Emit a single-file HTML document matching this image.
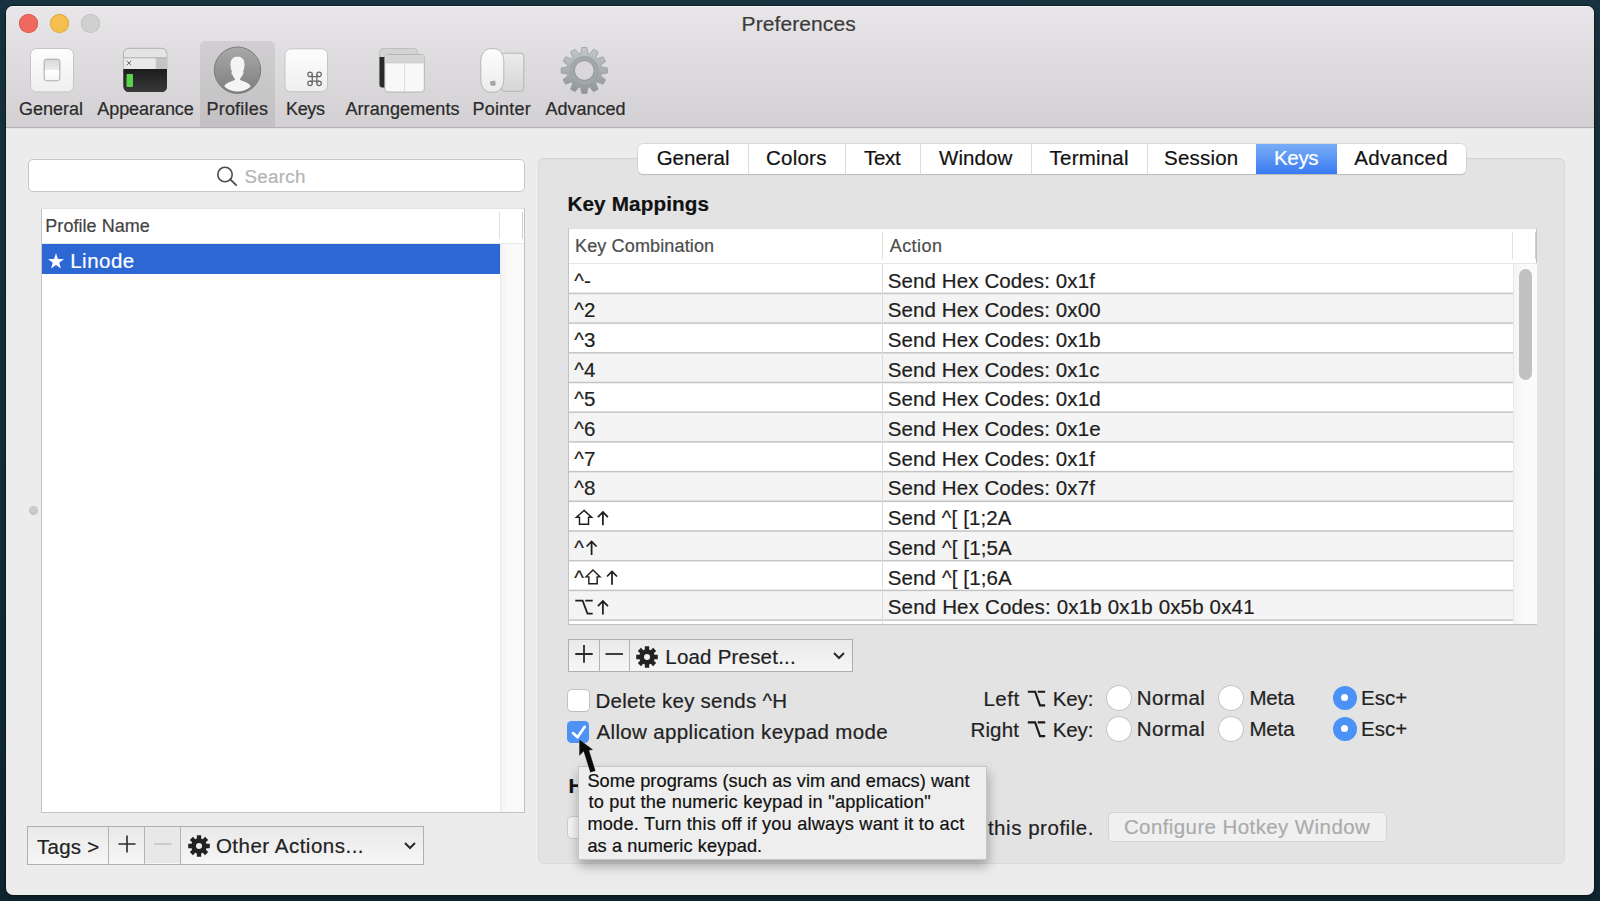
<!DOCTYPE html>
<html><head><meta charset="utf-8"><title>Preferences</title>
<style>
html,body{margin:0;padding:0;}
body{width:1600px;height:901px;overflow:hidden;position:relative;background:linear-gradient(180deg,#17333f 0%,#132d38 55%,#0f2530 100%);font-family:"Liberation Sans", sans-serif;}
body>div{position:absolute;}
.t{white-space:nowrap;-webkit-text-stroke:0.2px currentColor;}
</style></head><body>
<div style="left:6px;top:6px;width:1588px;height:889px;background:#ececec;border-radius:7px;box-shadow:0 0 0 1px rgba(0,0,0,0.3),0 2px 5px rgba(0,0,0,0.3);"></div>
<div style="left:6px;top:6px;width:1588px;height:121px;background:linear-gradient(#e8e6e8,#d2d0d2);border-radius:7px 7px 0 0;"></div>
<div style="left:6px;top:127px;width:1588px;height:1px;background:#b3b1b3;"></div>
<div style="left:6px;top:128px;width:1588px;height:1px;background:rgba(0,0,0,0.04);"></div>
<div style="left:13px;top:6px;width:1574px;height:1px;background:#f6f5f6;"></div>
<div style="left:18.9px;top:14.0px;width:19px;height:19px;background:#ee6a5e;border-radius:50%;box-shadow:inset 0 0 0 0.8px #d7594d;"></div>
<div style="left:50.0px;top:14.0px;width:19px;height:19px;background:#f5bf4f;border-radius:50%;box-shadow:inset 0 0 0 0.8px #dba53b;"></div>
<div style="left:81.0px;top:14.0px;width:19px;height:19px;background:#d1d0d1;border-radius:50%;box-shadow:inset 0 0 0 0.8px #bfbebf;"></div>
<div class="t" style="left:741.60px;top:12.92px;font-size:21px;line-height:21px;color:#3b3b3b;font-weight:normal;letter-spacing:0.090px;">Preferences</div>
<div style="left:200px;top:41px;width:75px;height:86px;background:rgba(0,0,0,0.075);border-radius:5px 5px 0 0;"></div>
<div class="t" style="left:19.00px;top:100.46px;font-size:18px;line-height:18px;color:#2a2a2a;font-weight:normal;letter-spacing:0.000px;">General</div>
<div class="t" style="left:97.25px;top:100.46px;font-size:18px;line-height:18px;color:#2a2a2a;font-weight:normal;letter-spacing:-0.056px;">Appearance</div>
<div class="t" style="left:206.50px;top:100.46px;font-size:18px;line-height:18px;color:#2a2a2a;font-weight:normal;letter-spacing:0.200px;">Profiles</div>
<div class="t" style="left:286.00px;top:100.46px;font-size:18px;line-height:18px;color:#2a2a2a;font-weight:normal;letter-spacing:-0.333px;">Keys</div>
<div class="t" style="left:345.40px;top:100.46px;font-size:18px;line-height:18px;color:#2a2a2a;font-weight:normal;letter-spacing:0.100px;">Arrangements</div>
<div class="t" style="left:472.50px;top:100.46px;font-size:18px;line-height:18px;color:#2a2a2a;font-weight:normal;letter-spacing:0.183px;">Pointer</div>
<div class="t" style="left:545.50px;top:100.46px;font-size:18px;line-height:18px;color:#2a2a2a;font-weight:normal;letter-spacing:0.000px;">Advanced</div>

<svg style="position:absolute;left:0;top:0" width="700" height="130" viewBox="0 0 700 130">
<defs>
<linearGradient id="gW" x1="0" y1="0" x2="0" y2="1"><stop offset="0" stop-color="#fdfdfd"/><stop offset="1" stop-color="#efeff0"/></linearGradient>
<linearGradient id="gSw" x1="0" y1="0" x2="0" y2="1"><stop offset="0" stop-color="#d8d8da"/><stop offset="0.5" stop-color="#ececee"/><stop offset="0.52" stop-color="#ffffff"/><stop offset="1" stop-color="#f4f4f4"/></linearGradient>
<linearGradient id="gTerm" x1="0" y1="0" x2="0" y2="1"><stop offset="0" stop-color="#1c1c1c"/><stop offset="1" stop-color="#3a3a3a"/></linearGradient>
<linearGradient id="gProf" x1="0" y1="0" x2="0" y2="1"><stop offset="0" stop-color="#a9a9a9"/><stop offset="1" stop-color="#7e7e7e"/></linearGradient>
<linearGradient id="gGear" x1="0" y1="0" x2="0" y2="1"><stop offset="0" stop-color="#c3c8ca"/><stop offset="1" stop-color="#8f9496"/></linearGradient>
<linearGradient id="gPad" x1="0" y1="0" x2="0" y2="1"><stop offset="0" stop-color="#ececec"/><stop offset="1" stop-color="#d6d6d6"/></linearGradient>
</defs>
<!-- General -->
<rect x="30.5" y="48.5" width="43" height="43.5" rx="6" fill="url(#gW)" stroke="#c4c4c6" stroke-width="1"/>
<rect x="44.2" y="59.2" width="15.6" height="21.6" rx="2.5" fill="url(#gSw)" stroke="#a9a9ab" stroke-width="1"/>
<!-- Appearance -->
<rect x="123.5" y="48.2" width="43.5" height="43.8" rx="5.5" fill="#2e2e2e"/>
<path d="M123.5 69 V53.7 a5.5 5.5 0 0 1 5.5 -5.5 H161.5 a5.5 5.5 0 0 1 5.5 5.5 V69 Z" fill="#e4e4e4" stroke="#b5b5b5" stroke-width="0.8"/>
<rect x="123.8" y="58" width="32" height="11" fill="#e9e9e9"/>
<rect x="155.8" y="58" width="11" height="11" fill="#c4c4c4"/>
<line x1="123.8" y1="57.8" x2="166.8" y2="57.8" stroke="#9f9f9f" stroke-width="0.8"/>
<path d="M126.8 60.8 L131.2 65.2 M131.2 60.8 L126.8 65.2" stroke="#555" stroke-width="0.8"/>
<path d="M123.5 69 H167 V86.5 a5.5 5.5 0 0 1 -5.5 5.5 H129 a5.5 5.5 0 0 1 -5.5 -5.5 Z" fill="url(#gTerm)"/>
<rect x="126.5" y="74" width="6.5" height="13" rx="1" fill="#5ad24a"/>
<!-- Profiles -->
<circle cx="237.5" cy="70.2" r="23.2" fill="url(#gProf)" stroke="#6f6f6f" stroke-width="0.8"/>
<path d="M237.5 56.5 c-5 0 -7.2 3.8 -7 8.5 c0.1 2.5 0.6 5 1.5 6.8 c-0.8 1 -0.6 2.4 0.5 3 c0.5 1.5 1.4 3 2.4 3.9 v1.4 c-3 1.3 -9.5 2.8 -10.6 6.4 c3.8 3.4 8.3 5.1 13.2 5.1 s9.4 -1.7 13.2 -5.1 c-1.1 -3.6 -7.6 -5.1 -10.6 -6.4 v-1.4 c1 -0.9 1.9 -2.4 2.4 -3.9 c1.1 -0.6 1.3 -2 0.5 -3 c0.9 -1.8 1.4 -4.3 1.5 -6.8 c0.2 -4.7 -2 -8.5 -7 -8.5 z" fill="#f4f4f4"/>
<!-- Keys -->
<rect x="285" y="48.8" width="42.5" height="43" rx="6" fill="url(#gW)" stroke="#c4c4c6" stroke-width="1"/>
<path d="M312.30 74.25 V83.25 M316.80 74.25 V83.25 M310.05 76.50 H319.05 M310.05 81.00 H319.05" fill="none" stroke="#6b6b6b" stroke-width="1.25"/><circle cx="310.05" cy="74.25" r="2.25" fill="none" stroke="#6b6b6b" stroke-width="1.25"/><circle cx="319.05" cy="74.25" r="2.25" fill="none" stroke="#6b6b6b" stroke-width="1.25"/><circle cx="310.05" cy="83.25" r="2.25" fill="none" stroke="#6b6b6b" stroke-width="1.25"/><circle cx="319.05" cy="83.25" r="2.25" fill="none" stroke="#6b6b6b" stroke-width="1.25"/>
<!-- Arrangements -->
<path d="M379.5 87 V52 a3.5 3.5 0 0 1 3.5 -3.5 H414 a3.5 3.5 0 0 1 3.5 3.5 V88 H383 a3.5 3.5 0 0 1 -3.5 -3.5 z" fill="#d3d3d3" stroke="#b9b9b9" stroke-width="0.8"/>
<path d="M379.5 57 H385.5 V87.5 H383 a3.5 3.5 0 0 1 -3.5 -3.5 Z" fill="#2a2a2a"/>
<rect x="384.8" y="54.5" width="39.5" height="37.5" rx="3" fill="#f8f8f9" stroke="#b0b0b0" stroke-width="0.9"/>
<path d="M385.2 63 V57.9 a3 3 0 0 1 3 -3 H420.9 a3 3 0 0 1 3 3 V63 Z" fill="#d5d5d5"/>
<line x1="385.2" y1="63" x2="423.9" y2="63" stroke="#c4c4c4" stroke-width="0.6"/>
<line x1="404.5" y1="63" x2="404.5" y2="91.5" stroke="#d6d6d6" stroke-width="0.8"/>
<!-- Pointer -->
<linearGradient id="gMouse" x1="0" y1="0" x2="0" y2="1"><stop offset="0" stop-color="#fdfdfd"/><stop offset="1" stop-color="#ececee"/></linearGradient>
<rect x="501.5" y="53.3" width="22.3" height="38" rx="2.8" fill="url(#gPad)" stroke="#a9a9a9" stroke-width="0.8"/>
<rect x="480.8" y="48.6" width="23" height="43.6" rx="9.5" ry="12" fill="url(#gMouse)" stroke="#a9a9a9" stroke-width="0.8"/>
<path d="M493 81.2 c-0.6 -0.3 -1.3 -0.4 -1.9 -0.1 c-1.2 0.5 -1.4 2.2 -0.7 3.5 c0.4 0.7 0.9 1.4 1.5 1.3 c0.4 0 0.6 -0.3 1.1 -0.3 s0.7 0.3 1.1 0.3 c0.6 0 1.1 -0.7 1.5 -1.3 c0.2 -0.3 0.3 -0.6 0.4 -0.9 c-0.9 -0.4 -1.1 -1.7 -0.3 -2.3 c-0.4 -0.5 -1 -0.7 -1.5 -0.6 c-0.5 0 -0.8 0.3 -1.2 0.4 z M493.1 80.9 c0.1 -0.6 0.5 -1.1 1 -1.3 c0.1 0.6 -0.3 1.2 -1 1.3 z" fill="#a4a4a6"/>
<!-- Advanced gear -->
<g transform="translate(584.3,70.5)">
<path id="gearp" fill="url(#gGear)" stroke="#8a8f91" stroke-width="0.6" d="M-3.61 -16.92 L-2.60 -23.05 L2.60 -23.05 L3.61 -16.92 L5.34 -16.46 L9.27 -21.27 L13.78 -18.66 L11.58 -12.85 L12.85 -11.58 L18.66 -13.78 L21.27 -9.27 L16.46 -5.34 L16.92 -3.61 L23.05 -2.60 L23.05 2.60 L16.92 3.61 L16.46 5.34 L21.27 9.27 L18.66 13.78 L12.85 11.58 L11.58 12.85 L13.78 18.66 L9.27 21.27 L5.34 16.46 L3.61 16.92 L2.60 23.05 L-2.60 23.05 L-3.61 16.92 L-5.34 16.46 L-9.27 21.27 L-13.78 18.66 L-11.58 12.85 L-12.85 11.58 L-18.66 13.78 L-21.27 9.27 L-16.46 5.34 L-16.92 3.61 L-23.05 2.60 L-23.05 -2.60 L-16.92 -3.61 L-16.46 -5.34 L-21.27 -9.27 L-18.66 -13.78 L-12.85 -11.58 L-11.58 -12.85 L-13.78 -18.66 L-9.27 -21.27 L-5.34 -16.46 Z"/>
<circle r="12.3" fill="none" stroke="#a2a7a9" stroke-width="3.6"/>
<circle r="14.2" fill="none" stroke="#9aa0a2" stroke-width="0.7"/>
<circle r="9.9" fill="#d9d7d9" stroke="#858a8c" stroke-width="0.9"/>
</g>
</svg>

<div style="left:27.5px;top:159px;width:497px;height:32.6px;background:#fff;border:1px solid #c7c7c7;border-radius:5px;box-sizing:border-box;"></div>
<svg style="position:absolute;left:214px;top:164px" width="26" height="26" viewBox="0 0 26 26"><circle cx="11" cy="10.5" r="7.2" fill="none" stroke="#4d4d4d" stroke-width="1.6"/><line x1="16.2" y1="15.4" x2="22.2" y2="21.2" stroke="#4d4d4d" stroke-width="1.8" stroke-linecap="round"/></svg>
<div class="t" style="left:244.40px;top:168.18px;font-size:18.8px;line-height:18.8px;color:#b4b4b4;font-weight:normal;letter-spacing:0.320px;">Search</div>
<div style="left:41px;top:207.8px;width:484px;height:605.2px;background:#fff;border:1px solid #c4c4c4;border-top-color:#e2e2e2;box-sizing:border-box;"></div>
<div style="left:42px;top:243px;width:482px;height:1px;background:#e8e8e8;"></div>
<div style="left:499px;top:212px;width:1px;height:27px;background:#e0e0e0;"></div>
<div style="left:522.3px;top:212px;width:1.2px;height:27px;background:#cfcfcf;"></div>
<div style="left:500px;top:244px;width:24px;height:568px;background:linear-gradient(90deg,#f3f3f3,#fafafa 30%,#f9f9f9);border-left:1px solid #ececec;box-sizing:border-box;"></div>
<div class="t" style="left:45.30px;top:217.16px;font-size:18px;line-height:18px;color:#444;font-weight:normal;letter-spacing:0.045px;">Profile Name</div>
<div style="left:42px;top:244px;width:458px;height:29.5px;background:#2c67d3;"></div>
<svg style="position:absolute;left:0;top:0" width="200" height="300"><polygon points="56.00,253.20 57.97,258.88 63.99,259.00 59.20,262.64 60.94,268.40 56.00,264.96 51.06,268.40 52.80,262.64 48.01,259.00 54.03,258.88" fill="#fff"/></svg>
<div class="t" style="left:70.20px;top:251.04px;font-size:20.5px;line-height:20.5px;color:#fff;font-weight:normal;letter-spacing:0.500px;">Linode</div>
<div style="left:29.2px;top:506.2px;width:9px;height:9px;background:radial-gradient(circle at 50% 40%,#d0d0d0,#bdbdbd);border-radius:50%;"></div>
<div style="left:27.3px;top:826.4px;width:397.2px;height:38.4px;background:linear-gradient(#e9e9e9,#f6f6f6);border:1px solid #afafaf;box-sizing:border-box;"></div>
<div style="left:144.6px;top:827.4px;width:35.7px;height:36px;background:#e8e8e8;"></div>
<div style="left:108.1px;top:827px;width:1px;height:37px;background:#b3b3b3;"></div>
<div style="left:144.1px;top:827px;width:1px;height:37px;background:#b3b3b3;"></div>
<div style="left:179.8px;top:827px;width:1px;height:37px;background:#b3b3b3;"></div>
<div class="t" style="left:37.10px;top:836.64px;font-size:20.5px;line-height:20.5px;color:#222;font-weight:normal;letter-spacing:0.220px;">Tags &gt;</div>
<svg style="position:absolute;left:110px;top:828px" width="34" height="34"><path d="M17 7.5 V24.5 M8.5 16 H25.5" stroke="#2a2a2a" stroke-width="1.6"/></svg>
<svg style="position:absolute;left:146px;top:828px" width="34" height="34"><path d="M8 16 H25.5" stroke="#c2c2c2" stroke-width="1.6"/></svg>
<svg style="position:absolute;left:187.7px;top:835.2px" width="22" height="22" viewBox="-11 -11 22 22"><path fill="#222" fill-rule="evenodd" d="M-2.16 -7.50 L-2.19 -10.78 L2.19 -10.78 L2.16 -7.50 L3.78 -6.82 L6.08 -9.17 L9.17 -6.08 L6.82 -3.78 L7.50 -2.16 L10.78 -2.19 L10.78 2.19 L7.50 2.16 L6.82 3.78 L9.17 6.08 L6.08 9.17 L3.78 6.82 L2.16 7.50 L2.19 10.78 L-2.19 10.78 L-2.16 7.50 L-3.78 6.82 L-6.08 9.17 L-9.17 6.08 L-6.82 3.78 L-7.50 2.16 L-10.78 2.19 L-10.78 -2.19 L-7.50 -2.16 L-6.82 -3.78 L-9.17 -6.08 L-6.08 -9.17 L-3.78 -6.82 Z M3.0 0 A3.0 3.0 0 1 0 -3.0 0 A3.0 3.0 0 1 0 3.0 0 Z"/></svg>
<div class="t" style="left:215.90px;top:836.14px;font-size:20.5px;line-height:20.5px;color:#222;font-weight:normal;letter-spacing:0.500px;">Other Actions...</div>
<svg style="position:absolute;left:402px;top:840px" width="16" height="12"><path d="M3 3 L8 8 L13 3" fill="none" stroke="#2a2a2a" stroke-width="2"/></svg>
<div style="left:538.3px;top:157.6px;width:1026.7px;height:706px;background:#e3e3e3;border-radius:6px;box-shadow:inset 0 0 0 1px rgba(0,0,0,0.035), inset 0 1px 1.5px rgba(0,0,0,0.05);"></div>
<div style="left:638px;top:143.6px;width:828.2px;height:30.7px;background:#fff;border-radius:5px;box-shadow:0 0 0 0.5px #c6c6c6, 0 1px 0.8px rgba(0,0,0,0.22);"></div>
<div style="left:1256px;top:143.6px;width:81.2px;height:30.7px;background:linear-gradient(#79acf6,#5d98f4 45%,#3779f2);"></div>
<div style="left:747.9px;top:143.6px;width:1px;height:30.7px;background:#dcdcdc;"></div>
<div style="left:844.9px;top:143.6px;width:1px;height:30.7px;background:#dcdcdc;"></div>
<div style="left:919.9px;top:143.6px;width:1px;height:30.7px;background:#dcdcdc;"></div>
<div style="left:1030.9px;top:143.6px;width:1px;height:30.7px;background:#dcdcdc;"></div>
<div style="left:1147.0px;top:143.6px;width:1px;height:30.7px;background:#dcdcdc;"></div>
<div class="t" style="left:656.70px;top:148.44px;font-size:20.5px;line-height:20.5px;color:#111;font-weight:normal;letter-spacing:-0.017px;">General</div>
<div class="t" style="left:766.00px;top:148.44px;font-size:20.5px;line-height:20.5px;color:#111;font-weight:normal;letter-spacing:0.240px;">Colors</div>
<div class="t" style="left:864.00px;top:148.44px;font-size:20.5px;line-height:20.5px;color:#111;font-weight:normal;letter-spacing:-0.333px;">Text</div>
<div class="t" style="left:939.00px;top:148.44px;font-size:20.5px;line-height:20.5px;color:#111;font-weight:normal;letter-spacing:0.080px;">Window</div>
<div class="t" style="left:1049.60px;top:148.44px;font-size:20.5px;line-height:20.5px;color:#111;font-weight:normal;letter-spacing:0.200px;">Terminal</div>
<div class="t" style="left:1164.00px;top:148.44px;font-size:20.5px;line-height:20.5px;color:#111;font-weight:normal;letter-spacing:0.217px;">Session</div>
<div class="t" style="left:1274.00px;top:148.44px;font-size:20.5px;line-height:20.5px;color:#fff;font-weight:normal;letter-spacing:-0.333px;">Keys</div>
<div class="t" style="left:1354.20px;top:148.44px;font-size:20.5px;line-height:20.5px;color:#111;font-weight:normal;letter-spacing:0.314px;">Advanced</div>
<div class="t" style="left:567.40px;top:193.67px;font-size:20.7px;line-height:20.7px;color:#111;font-weight:bold;letter-spacing:0.136px;">Key Mappings</div>
<div style="left:567.8px;top:227.9px;width:969.7px;height:396.8px;background:#fff;border:1px solid #c2c2c2;border-top-color:#dedede;box-sizing:border-box;"></div>
<div style="left:568.8px;top:263px;width:968px;height:1px;background:#e6e6e6;"></div>
<div style="left:882px;top:232px;width:1px;height:27px;background:#e2e2e2;"></div>
<div style="left:1512px;top:232px;width:1px;height:27px;background:#e2e2e2;"></div>
<div style="left:1535.2px;top:232px;width:1.2px;height:27px;background:#cfcfcf;"></div>
<div class="t" style="left:575.00px;top:237.06px;font-size:18px;line-height:18px;color:#4c4c4c;font-weight:normal;letter-spacing:0.143px;">Key Combination</div>
<div class="t" style="left:889.70px;top:237.06px;font-size:18px;line-height:18px;color:#4c4c4c;font-weight:normal;letter-spacing:0.460px;">Action</div>
<div style="left:568.8px;top:263.6px;width:944.2px;height:29.7px;background:#ffffff;"></div>
<div class="t" style="left:574.3px;top:270.54px;font-size:20.5px;line-height:20.5px;color:#1e1e1e;font-weight:normal;">^-</div>
<div class="t" style="left:887.75px;top:270.54px;font-size:20.5px;line-height:20.5px;color:#1e1e1e;font-weight:normal;letter-spacing:0.105px;">Send Hex Codes: 0x1f</div>
<div style="left:568.8px;top:293.3px;width:944.2px;height:29.7px;background:#f4f4f4;"></div>
<div class="t" style="left:574.3px;top:300.24px;font-size:20.5px;line-height:20.5px;color:#1e1e1e;font-weight:normal;">^2</div>
<div class="t" style="left:887.75px;top:300.24px;font-size:20.5px;line-height:20.5px;color:#1e1e1e;font-weight:normal;letter-spacing:0.105px;">Send Hex Codes: 0x00</div>
<div style="left:568.8px;top:323.0px;width:944.2px;height:29.7px;background:#ffffff;"></div>
<div class="t" style="left:574.3px;top:329.94px;font-size:20.5px;line-height:20.5px;color:#1e1e1e;font-weight:normal;">^3</div>
<div class="t" style="left:887.75px;top:329.94px;font-size:20.5px;line-height:20.5px;color:#1e1e1e;font-weight:normal;letter-spacing:0.105px;">Send Hex Codes: 0x1b</div>
<div style="left:568.8px;top:352.70000000000005px;width:944.2px;height:29.7px;background:#f4f4f4;"></div>
<div class="t" style="left:574.3px;top:359.64px;font-size:20.5px;line-height:20.5px;color:#1e1e1e;font-weight:normal;">^4</div>
<div class="t" style="left:887.75px;top:359.64px;font-size:20.5px;line-height:20.5px;color:#1e1e1e;font-weight:normal;letter-spacing:0.105px;">Send Hex Codes: 0x1c</div>
<div style="left:568.8px;top:382.40000000000003px;width:944.2px;height:29.7px;background:#ffffff;"></div>
<div class="t" style="left:574.3px;top:389.34px;font-size:20.5px;line-height:20.5px;color:#1e1e1e;font-weight:normal;">^5</div>
<div class="t" style="left:887.75px;top:389.34px;font-size:20.5px;line-height:20.5px;color:#1e1e1e;font-weight:normal;letter-spacing:0.105px;">Send Hex Codes: 0x1d</div>
<div style="left:568.8px;top:412.1px;width:944.2px;height:29.7px;background:#f4f4f4;"></div>
<div class="t" style="left:574.3px;top:419.04px;font-size:20.5px;line-height:20.5px;color:#1e1e1e;font-weight:normal;">^6</div>
<div class="t" style="left:887.75px;top:419.04px;font-size:20.5px;line-height:20.5px;color:#1e1e1e;font-weight:normal;letter-spacing:0.105px;">Send Hex Codes: 0x1e</div>
<div style="left:568.8px;top:441.8px;width:944.2px;height:29.7px;background:#ffffff;"></div>
<div class="t" style="left:574.3px;top:448.74px;font-size:20.5px;line-height:20.5px;color:#1e1e1e;font-weight:normal;">^7</div>
<div class="t" style="left:887.75px;top:448.74px;font-size:20.5px;line-height:20.5px;color:#1e1e1e;font-weight:normal;letter-spacing:0.105px;">Send Hex Codes: 0x1f</div>
<div style="left:568.8px;top:471.5px;width:944.2px;height:29.7px;background:#f4f4f4;"></div>
<div class="t" style="left:574.3px;top:478.44px;font-size:20.5px;line-height:20.5px;color:#1e1e1e;font-weight:normal;">^8</div>
<div class="t" style="left:887.75px;top:478.44px;font-size:20.5px;line-height:20.5px;color:#1e1e1e;font-weight:normal;letter-spacing:0.105px;">Send Hex Codes: 0x7f</div>
<div style="left:568.8px;top:501.20000000000005px;width:944.2px;height:29.7px;background:#ffffff;"></div>
<div class="t" style="left:887.75px;top:508.14px;font-size:20.5px;line-height:20.5px;color:#1e1e1e;font-weight:normal;letter-spacing:0.104px;">Send ^[ [1;2A</div>
<div style="left:568.8px;top:530.9000000000001px;width:944.2px;height:29.7px;background:#f4f4f4;"></div>
<div class="t" style="left:574.3px;top:537.84px;font-size:20.5px;line-height:20.5px;color:#1e1e1e;font-weight:normal;">^</div>
<div class="t" style="left:887.75px;top:537.84px;font-size:20.5px;line-height:20.5px;color:#1e1e1e;font-weight:normal;letter-spacing:0.125px;">Send ^[ [1;5A</div>
<div style="left:568.8px;top:560.6px;width:944.2px;height:29.7px;background:#ffffff;"></div>
<div class="t" style="left:574.3px;top:567.54px;font-size:20.5px;line-height:20.5px;color:#1e1e1e;font-weight:normal;">^</div>
<div class="t" style="left:887.75px;top:567.54px;font-size:20.5px;line-height:20.5px;color:#1e1e1e;font-weight:normal;letter-spacing:0.125px;">Send ^[ [1;6A</div>
<div style="left:568.8px;top:590.3px;width:944.2px;height:29.7px;background:#f4f4f4;"></div>
<div class="t" style="left:887.75px;top:597.24px;font-size:20.5px;line-height:20.5px;color:#1e1e1e;font-weight:normal;letter-spacing:0.162px;">Send Hex Codes: 0x1b 0x1b 0x5b 0x41</div>
<svg style="position:absolute;left:0;top:0" width="1600" height="901"><path d="M602.9 525.3000000000001 V512.2 M597.9 517.1 L602.9 512.1 L607.9 517.1 M591.6 555.0000000000001 V541.6 M586.6 546.5 L591.6 541.5 L596.6 546.5 M612 584.7 V571.6 M607.0 576.5 L612 571.5 L617.0 576.5 M575.3 600.5999999999999 H582.608 L587.48 613.5 H592.7 M585.218 600.5999999999999 H592.7 M602.9 614.4 V601.1999999999999 M597.9 606.0999999999999 L602.9 601.0999999999999 L607.9 606.0999999999999" fill="none" stroke="#1e1e1e" stroke-width="1.75" stroke-linejoin="miter"/><path d="M584.0 510.4000000000001 L591.6 517.2 H588.524 V524.2 H579.476 V517.2 H576.4 Z M593.0 570.1 L599.9 576.85 H597.16 V583.8000000000001 H588.84 V576.85 H586.1 Z" fill="none" stroke="#1e1e1e" stroke-width="1.45" stroke-linejoin="miter"/></svg>
<div style="left:568.8px;top:620.0px;width:944.2px;height:4px;background:#fff;"></div>
<div style="left:568.8px;top:292px;width:944.2px;height:1px;background:rgba(196,196,196,0.350);"></div>
<div style="left:568.8px;top:293px;width:944.2px;height:1px;background:rgba(196,196,196,1.000);"></div>
<div style="left:568.8px;top:294px;width:944.2px;height:1px;background:rgba(196,196,196,0.150);"></div>
<div style="left:568.8px;top:322px;width:944.2px;height:1px;background:rgba(196,196,196,0.650);"></div>
<div style="left:568.8px;top:323px;width:944.2px;height:1px;background:rgba(196,196,196,0.850);"></div>
<div style="left:568.8px;top:352px;width:944.2px;height:1px;background:rgba(196,196,196,0.950);"></div>
<div style="left:568.8px;top:353px;width:944.2px;height:1px;background:rgba(196,196,196,0.550);"></div>
<div style="left:568.8px;top:381px;width:944.2px;height:1px;background:rgba(196,196,196,0.250);"></div>
<div style="left:568.8px;top:382px;width:944.2px;height:1px;background:rgba(196,196,196,1.000);"></div>
<div style="left:568.8px;top:383px;width:944.2px;height:1px;background:rgba(196,196,196,0.250);"></div>
<div style="left:568.8px;top:411px;width:944.2px;height:1px;background:rgba(196,196,196,0.550);"></div>
<div style="left:568.8px;top:412px;width:944.2px;height:1px;background:rgba(196,196,196,0.950);"></div>
<div style="left:568.8px;top:441px;width:944.2px;height:1px;background:rgba(196,196,196,0.850);"></div>
<div style="left:568.8px;top:442px;width:944.2px;height:1px;background:rgba(196,196,196,0.650);"></div>
<div style="left:568.8px;top:470px;width:944.2px;height:1px;background:rgba(196,196,196,0.150);"></div>
<div style="left:568.8px;top:471px;width:944.2px;height:1px;background:rgba(196,196,196,1.000);"></div>
<div style="left:568.8px;top:472px;width:944.2px;height:1px;background:rgba(196,196,196,0.350);"></div>
<div style="left:568.8px;top:500px;width:944.2px;height:1px;background:rgba(196,196,196,0.450);"></div>
<div style="left:568.8px;top:501px;width:944.2px;height:1px;background:rgba(196,196,196,1.000);"></div>
<div style="left:568.8px;top:502px;width:944.2px;height:1px;background:rgba(196,196,196,0.050);"></div>
<div style="left:568.8px;top:530px;width:944.2px;height:1px;background:rgba(196,196,196,0.750);"></div>
<div style="left:568.8px;top:531px;width:944.2px;height:1px;background:rgba(196,196,196,0.750);"></div>
<div style="left:568.8px;top:559px;width:944.2px;height:1px;background:rgba(196,196,196,0.050);"></div>
<div style="left:568.8px;top:560px;width:944.2px;height:1px;background:rgba(196,196,196,1.000);"></div>
<div style="left:568.8px;top:561px;width:944.2px;height:1px;background:rgba(196,196,196,0.450);"></div>
<div style="left:568.8px;top:589px;width:944.2px;height:1px;background:rgba(196,196,196,0.350);"></div>
<div style="left:568.8px;top:590px;width:944.2px;height:1px;background:rgba(196,196,196,1.000);"></div>
<div style="left:568.8px;top:591px;width:944.2px;height:1px;background:rgba(196,196,196,0.150);"></div>
<div style="left:568.8px;top:619px;width:944.2px;height:1px;background:rgba(196,196,196,0.650);"></div>
<div style="left:568.8px;top:620px;width:944.2px;height:1px;background:rgba(196,196,196,0.850);"></div>
<div style="left:882px;top:263.6px;width:1px;height:360px;background:#dcdcdc;"></div>
<div style="left:1513px;top:263.6px;width:23.5px;height:360px;background:linear-gradient(90deg,#f4f4f4,#fafafa 40%,#fbfbfb);border-left:1px solid #e8e8e8;box-sizing:border-box;"></div>
<div style="left:1519px;top:268.8px;width:13px;height:111px;background:#c1c1c1;border-radius:6.5px;"></div>
<div style="left:568.2px;top:638.7px;width:284.8px;height:33.5px;background:linear-gradient(#e9e9e9,#f6f6f6);border:1px solid #afafaf;box-sizing:border-box;"></div>
<div style="left:599.0px;top:640px;width:1px;height:31px;background:#b3b3b3;"></div>
<div style="left:628.7px;top:640px;width:1px;height:31px;background:#b3b3b3;"></div>
<svg style="position:absolute;left:568px;top:639px" width="62" height="33"><path d="M16 6 V23.8 M7.3 15 H24.7" stroke="#2a2a2a" stroke-width="1.8"/><path d="M37.5 15 H55" stroke="#2a2a2a" stroke-width="1.8"/></svg>
<svg style="position:absolute;left:636px;top:646px" width="22" height="22" viewBox="-11 -11 22 22"><path fill="#222" fill-rule="evenodd" d="M-2.16 -7.50 L-2.19 -10.78 L2.19 -10.78 L2.16 -7.50 L3.78 -6.82 L6.08 -9.17 L9.17 -6.08 L6.82 -3.78 L7.50 -2.16 L10.78 -2.19 L10.78 2.19 L7.50 2.16 L6.82 3.78 L9.17 6.08 L6.08 9.17 L3.78 6.82 L2.16 7.50 L2.19 10.78 L-2.19 10.78 L-2.16 7.50 L-3.78 6.82 L-6.08 9.17 L-9.17 6.08 L-6.82 3.78 L-7.50 2.16 L-10.78 2.19 L-10.78 -2.19 L-7.50 -2.16 L-6.82 -3.78 L-9.17 -6.08 L-6.08 -9.17 L-3.78 -6.82 Z M3.0 0 A3.0 3.0 0 1 0 -3.0 0 A3.0 3.0 0 1 0 3.0 0 Z"/></svg>
<div class="t" style="left:665.30px;top:647.34px;font-size:20.5px;line-height:20.5px;color:#222;font-weight:normal;letter-spacing:0.208px;">Load Preset...</div>
<svg style="position:absolute;left:830.5px;top:650px" width="16" height="12"><path d="M3 3 L8 8 L13 3" fill="none" stroke="#2a2a2a" stroke-width="2"/></svg>
<div style="left:567.5px;top:690.2px;width:21.7px;height:21.3px;background:#fff;border-radius:4px;box-shadow:0 0 0 0.8px #bcbcbc, 0 0.6px 0.8px rgba(0,0,0,0.15);"></div>
<div class="t" style="left:595.50px;top:690.94px;font-size:20.5px;line-height:20.5px;color:#222;font-weight:normal;letter-spacing:0.233px;">Delete key sends ^H</div>
<div style="left:567.3px;top:721.2px;width:22.2px;height:21.6px;background:#4d93f6;border-radius:4.5px;"></div>
<svg style="position:absolute;left:567.5px;top:721px" width="22" height="22"><path d="M5.0 12.1 L9.5 16.3 L16.7 5.8" fill="none" stroke="#fff" stroke-width="2.7" stroke-linecap="round" stroke-linejoin="round"/></svg>
<div class="t" style="left:596.50px;top:721.54px;font-size:20.5px;line-height:20.5px;color:#222;font-weight:normal;letter-spacing:0.346px;">Allow application keypad mode</div>
<div class="t" style="left:983.40px;top:688.84px;font-size:20.5px;line-height:20.5px;color:#222;font-weight:normal;letter-spacing:0.533px;">Left</div>
<div class="t" style="left:1052.80px;top:688.84px;font-size:20.5px;line-height:20.5px;color:#222;font-weight:normal;letter-spacing:-0.133px;">Key:</div>
<div class="t" style="left:970.50px;top:719.54px;font-size:20.5px;line-height:20.5px;color:#222;font-weight:normal;letter-spacing:0.125px;">Right</div>
<div class="t" style="left:1052.80px;top:719.54px;font-size:20.5px;line-height:20.5px;color:#222;font-weight:normal;letter-spacing:-0.133px;">Key:</div>
<svg style="position:absolute;left:0;top:0" width="1600" height="901"><path d="M1027.8 691.7 H1035.108 L1039.98 705.4000000000001 H1045.2 M1037.718 691.7 H1045.2 M1027.8 722.4 H1035.108 L1039.98 736.1 H1045.2 M1037.718 722.4 H1045.2" fill="none" stroke="#1a1a1a" stroke-width="2.1"/></svg>
<div style="left:1107.2px;top:685.5px;width:24px;height:24px;background:#fff;border-radius:50%;box-shadow:0 0 0 0.8px #bdbdbd, 0 0.6px 0.8px rgba(0,0,0,0.12);"></div>
<div style="left:1219.4px;top:685.5px;width:24px;height:24px;background:#fff;border-radius:50%;box-shadow:0 0 0 0.8px #bdbdbd, 0 0.6px 0.8px rgba(0,0,0,0.12);"></div>
<div style="left:1332.5px;top:685.5px;width:24px;height:24px;background:#4a92f7;border-radius:50%;"></div>
<div style="left:1340.9px;top:693.9px;width:7.2px;height:7.2px;background:#fff;border-radius:50%;"></div>
<div class="t" style="left:1136.70px;top:687.64px;font-size:20.5px;line-height:20.5px;color:#222;font-weight:normal;letter-spacing:0.420px;">Normal</div>
<div class="t" style="left:1249.40px;top:687.64px;font-size:20.5px;line-height:20.5px;color:#222;font-weight:normal;letter-spacing:-0.133px;">Meta</div>
<div class="t" style="left:1361.00px;top:687.64px;font-size:20.5px;line-height:20.5px;color:#222;font-weight:normal;letter-spacing:0.000px;">Esc+</div>
<div style="left:1107.2px;top:716.9px;width:24px;height:24px;background:#fff;border-radius:50%;box-shadow:0 0 0 0.8px #bdbdbd, 0 0.6px 0.8px rgba(0,0,0,0.12);"></div>
<div style="left:1219.4px;top:716.9px;width:24px;height:24px;background:#fff;border-radius:50%;box-shadow:0 0 0 0.8px #bdbdbd, 0 0.6px 0.8px rgba(0,0,0,0.12);"></div>
<div style="left:1332.5px;top:716.9px;width:24px;height:24px;background:#4a92f7;border-radius:50%;"></div>
<div style="left:1340.9px;top:725.3px;width:7.2px;height:7.2px;background:#fff;border-radius:50%;"></div>
<div class="t" style="left:1136.70px;top:719.04px;font-size:20.5px;line-height:20.5px;color:#222;font-weight:normal;letter-spacing:0.420px;">Normal</div>
<div class="t" style="left:1249.40px;top:719.04px;font-size:20.5px;line-height:20.5px;color:#222;font-weight:normal;letter-spacing:-0.133px;">Meta</div>
<div class="t" style="left:1361.00px;top:719.04px;font-size:20.5px;line-height:20.5px;color:#222;font-weight:normal;letter-spacing:0.000px;">Esc+</div>
<div class="t" style="left:568.5px;top:775.77px;font-size:20.7px;line-height:20.7px;color:#111;font-weight:bold;">Hotkey</div>
<div style="left:567.8px;top:816.8px;width:21.5px;height:21.3px;background:#f4f4f4;border-radius:4px;box-shadow:0 0 0 0.8px #c4c4c4;"></div>
<div class="t" style="left:987.90px;top:818.14px;font-size:20.5px;line-height:20.5px;color:#222;font-weight:normal;letter-spacing:0.533px;">this profile.</div>
<div style="left:1108px;top:811.8px;width:278.8px;height:30.2px;background:#f0f0f0;border:1px solid #d4d4d4;border-radius:5px;box-sizing:border-box;"></div>
<div class="t" style="left:1123.90px;top:816.94px;font-size:20.5px;line-height:20.5px;color:#ababab;font-weight:normal;letter-spacing:0.405px;">Configure Hotkey Window</div>
<div style="left:578.3px;top:766.2px;width:408.3px;height:94.3px;background:#eeeeee;border:1px solid #c6c6c6;box-sizing:border-box;box-shadow:1px 6px 11px rgba(0,0,0,0.30);"></div>
<div class="t" style="left:587.40px;top:771.69px;font-size:18.2px;line-height:18.2px;color:#111;font-weight:normal;letter-spacing:0.049px;">Some programs (such as vim and emacs) want</div>
<div class="t" style="left:588.40px;top:793.39px;font-size:18.2px;line-height:18.2px;color:#111;font-weight:normal;letter-spacing:0.217px;">to put the numeric keypad in "application"</div>
<div class="t" style="left:587.40px;top:815.09px;font-size:18.2px;line-height:18.2px;color:#111;font-weight:normal;letter-spacing:0.219px;">mode. Turn this off if you always want it to act</div>
<div class="t" style="left:587.40px;top:836.79px;font-size:18.2px;line-height:18.2px;color:#111;font-weight:normal;letter-spacing:0.100px;">as a numeric keypad.</div>
<svg style="position:absolute;left:0;top:0" width="1600" height="901"><path d="M579.2 739.3 L579.2 756 L583.6 751.6 L590.2 772.6 L595.6 771 L589.2 750.4 L593.2 749.8 Z" fill="#0a0a0a" stroke="rgba(255,255,255,0.35)" stroke-width="0.6" stroke-linejoin="round"/></svg>
</body></html>
